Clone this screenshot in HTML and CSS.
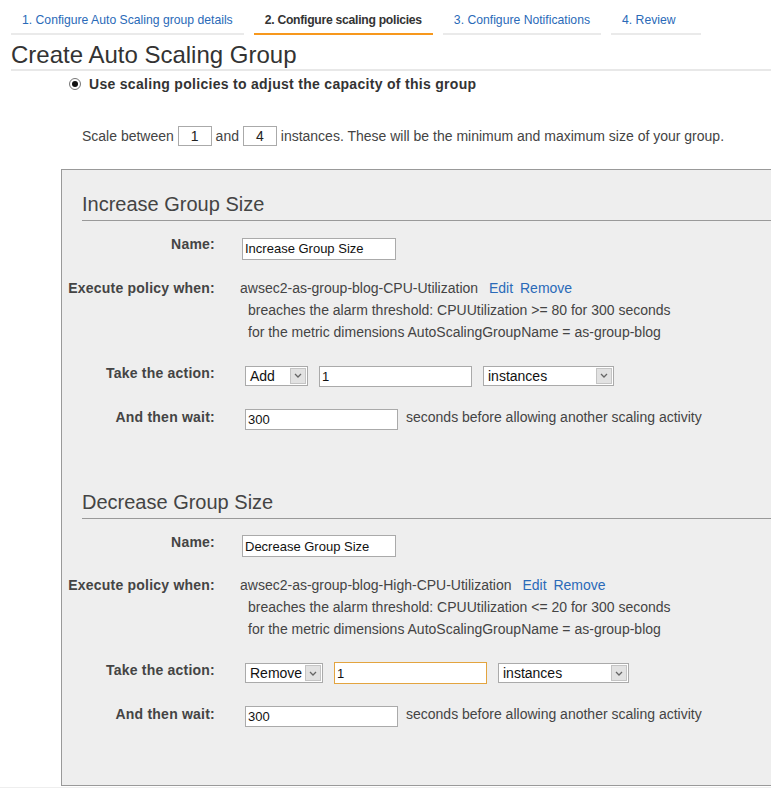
FILE: index.html
```html
<!DOCTYPE html>
<html>
<head>
<meta charset="utf-8">
<link rel="stylesheet" href="styles.css">
</head>
<body>
<div class="tabs">
  <div class="tab">1. Configure Auto Scaling group details</div>
  <div class="tab active">2. Configure scaling policies</div>
  <div class="tab">3. Configure Notifications</div>
  <div class="tab">4. Review</div>
</div>
<h1 class="title">Create Auto Scaling Group</h1>
<div class="radio-row"><span class="radio"><span class="dot"></span></span><span class="radio-label">Use scaling policies to adjust the capacity of this group</span></div>
<div class="scale-row">Scale between <span class="num-box">1</span> and <span class="num-box">4</span> instances. These will be the minimum and maximum size of your group.</div>

<div class="panel">
  <section class="policy">
    <h2 class="policy-title">Increase Group Size</h2>
    <div class="row row-name">
      <div class="label">Name:</div>
      <div class="value"><input class="field name-field" type="text" value="Increase Group Size"></div>
    </div>
    <div class="row row-exec">
      <div class="label">Execute policy when:</div>
      <div class="value">
        <div class="alarm">awsec2-as-group-blog-CPU-Utilization <a class="link link-edit">Edit</a> <a class="link link-remove">Remove</a></div>
        <div class="alarm-detail">breaches the alarm threshold: CPUUtilization &gt;= 80 for 300 seconds</div>
        <div class="alarm-detail">for the metric dimensions AutoScalingGroupName = as-group-blog</div>
      </div>
    </div>
    <div class="row row-action">
      <div class="label">Take the action:</div>
      <div class="value controls">
        <div class="select sel-add"><span class="sel-text">Add</span><span class="sel-arrow"><svg width="8" height="5" viewBox="0 0 8 5"><path d="M1 1 L4 4 L7 1" fill="none" stroke="#666" stroke-width="1.3"/></svg></span></div>
        <input class="field amount-field" type="text" value="1">
        <div class="select sel-unit"><span class="sel-text">instances</span><span class="sel-arrow"><svg width="8" height="5" viewBox="0 0 8 5"><path d="M1 1 L4 4 L7 1" fill="none" stroke="#666" stroke-width="1.3"/></svg></span></div>
      </div>
    </div>
    <div class="row row-wait">
      <div class="label">And then wait:</div>
      <div class="value controls">
        <input class="field wait-field" type="text" value="300">
        <span class="wait-text">seconds before allowing another scaling activity</span>
      </div>
    </div>
  </section>

  <section class="policy policy-2">
    <h2 class="policy-title">Decrease Group Size</h2>
    <div class="row row-name">
      <div class="label">Name:</div>
      <div class="value"><input class="field name-field" type="text" value="Decrease Group Size"></div>
    </div>
    <div class="row row-exec">
      <div class="label">Execute policy when:</div>
      <div class="value">
        <div class="alarm">awsec2-as-group-blog-High-CPU-Utilization <a class="link link-edit">Edit</a> <a class="link link-remove">Remove</a></div>
        <div class="alarm-detail">breaches the alarm threshold: CPUUtilization &lt;= 20 for 300 seconds</div>
        <div class="alarm-detail">for the metric dimensions AutoScalingGroupName = as-group-blog</div>
      </div>
    </div>
    <div class="row row-action">
      <div class="label">Take the action:</div>
      <div class="value controls">
        <div class="select sel-remove"><span class="sel-text">Remove</span><span class="sel-arrow"><svg width="8" height="5" viewBox="0 0 8 5"><path d="M1 1 L4 4 L7 1" fill="none" stroke="#666" stroke-width="1.3"/></svg></span></div>
        <input class="field amount-field focused" type="text" value="1">
        <div class="select sel-unit"><span class="sel-text">instances</span><span class="sel-arrow"><svg width="8" height="5" viewBox="0 0 8 5"><path d="M1 1 L4 4 L7 1" fill="none" stroke="#666" stroke-width="1.3"/></svg></span></div>
      </div>
    </div>
    <div class="row row-wait">
      <div class="label">And then wait:</div>
      <div class="value controls">
        <input class="field wait-field" type="text" value="300">
        <span class="wait-text">seconds before allowing another scaling activity</span>
      </div>
    </div>
  </section>
</div>
<div class="footer-line"></div>
</body>
</html>
```

FILE: styles.css
```css
html, body {
  margin: 0;
  padding: 0;
  background: #fff;
  overflow: hidden;
}
body {
  font-family: "Liberation Sans", Arial, sans-serif;
  font-size: 14px;
  color: #444;
}

/* Wizard tabs */
.tabs {
  display: flex;
  gap: 10px;
  padding-left: 11px;
}
.tab {
  padding: 12px 11px 5px;
  min-width: 68px;
  font-size: 12.2px;
  line-height: 16px;
  color: #2a6ab8;
  border-bottom: 2px solid #eaeaea;
  white-space: nowrap;
}
.tab.active {
  color: #333;
  font-weight: bold;
  letter-spacing: -0.28px;
  border-bottom-color: #f7981d;
}

/* Title */
.title {
  margin: 6px 0 0 11px;
  font-size: 24px;
  line-height: 28px;
  font-weight: normal;
  color: #333;
  border-bottom: 2px solid #e8e8e8;
}

/* Radio */
.radio-row {
  display: flex;
  align-items: center;
  margin: 5px 0 0 69px;
  line-height: 16px;
}
.radio {
  width: 10px;
  height: 10px;
  border: 1px solid #777;
  border-radius: 50%;
  background: #fff;
  display: flex;
  align-items: center;
  justify-content: center;
  margin-right: 8px;
}
.radio .dot {
  width: 6px;
  height: 6px;
  border-radius: 50%;
  background: #111;
}
.radio-label {
  font-weight: bold;
  color: #333;
  letter-spacing: 0.3px;
}

/* Scale row */
.scale-row {
  margin: 34px 0 0 82px;
  line-height: 20px;
  display: flex;
  align-items: center;
  white-space: pre;
}
.num-box {
  display: inline-block;
  box-sizing: border-box;
  width: 34px;
  height: 20px;
  border: 1px solid #aaa;
  background: #fff;
  text-align: center;
  line-height: 18px;
  color: #222;
  margin: 0;
}

/* Panel */
.panel {
  margin: 23px 0 0 61px;
  border: 1px solid #999;
  border-right: none;
  background: #eeeeee;
  padding: 22px 0 58px;
}
.policy-2 {
  margin-top: 60px;
}
.policy-title {
  margin: 0 0 0 20px;
  font-size: 20px;
  line-height: 24px;
  font-weight: normal;
  color: #444;
  padding-bottom: 4px;
  border-bottom: 1px solid #999;
}

.row {
  display: flex;
  align-items: flex-start;
}
.label {
  width: 153px;
  flex: none;
  text-align: right;
  font-weight: bold;
  line-height: 22px;
  color: #444;
  white-space: nowrap;
  letter-spacing: 0.22px;
}
.value {
  margin-left: 25px;
  line-height: 22px;
  white-space: nowrap;
}
.row-name { margin-top: 12px; }
.row-exec { margin-top: 17px; }
.row-action { margin-top: 19px; }
.row-wait { margin-top: 19px; }

.row-name .value { padding-top: 4px; margin-left: 27px; }
.row-action .value { padding-top: 4px; margin-left: 30px; }
.row-wait .value { margin-left: 30px; }

.controls {
  display: flex;
  align-items: flex-start;
}

.field {
  box-sizing: border-box;
  border: 1px solid #aaa;
  background: #fff;
  font-family: "Liberation Sans", Arial, sans-serif;
  font-size: 13px;
  color: #111;
  padding: 0 2px;
  margin: 0;
  outline: none;
}
.name-field { width: 154px; height: 22px; }
.amount-field { width: 153px; height: 21px; margin-left: 11px; }
.amount-field.focused { border-color: #e3a43f; height: 22px; margin-top: -1px; }
.wait-field { width: 153px; height: 21px; margin-top: 3px; }
.wait-text { margin-left: 8px; line-height: 22px; }

.alarm { color: #444; }
.alarm-detail { padding-left: 8px; }
.link { color: #2a6ab8; cursor: pointer; }
.link-edit { margin-left: 7px; }
.link-remove { margin-left: 3px; }

.select {
  box-sizing: border-box;
  height: 20px;
  border: 1px solid #aaa;
  background: #fff;
  display: flex;
  align-items: stretch;
  font-size: 14px;
  color: #111;
}
.sel-text {
  flex: 1;
  padding-left: 4px;
  line-height: 18px;
  white-space: nowrap;
}
.sel-arrow {
  width: 16px;
  flex: none;
  margin: 1px;
  background: #e2e2e2;
  border: 1px solid #c4c4c4;
  box-sizing: border-box;
  display: flex;
  align-items: center;
  justify-content: center;
}
.sel-add { width: 63px; }
.sel-remove { width: 78px; }
.sel-unit { width: 131px; margin-left: 11px; }

.footer-line {
  margin-top: 1px;
  border-top: 1px solid #eee;
}
```
